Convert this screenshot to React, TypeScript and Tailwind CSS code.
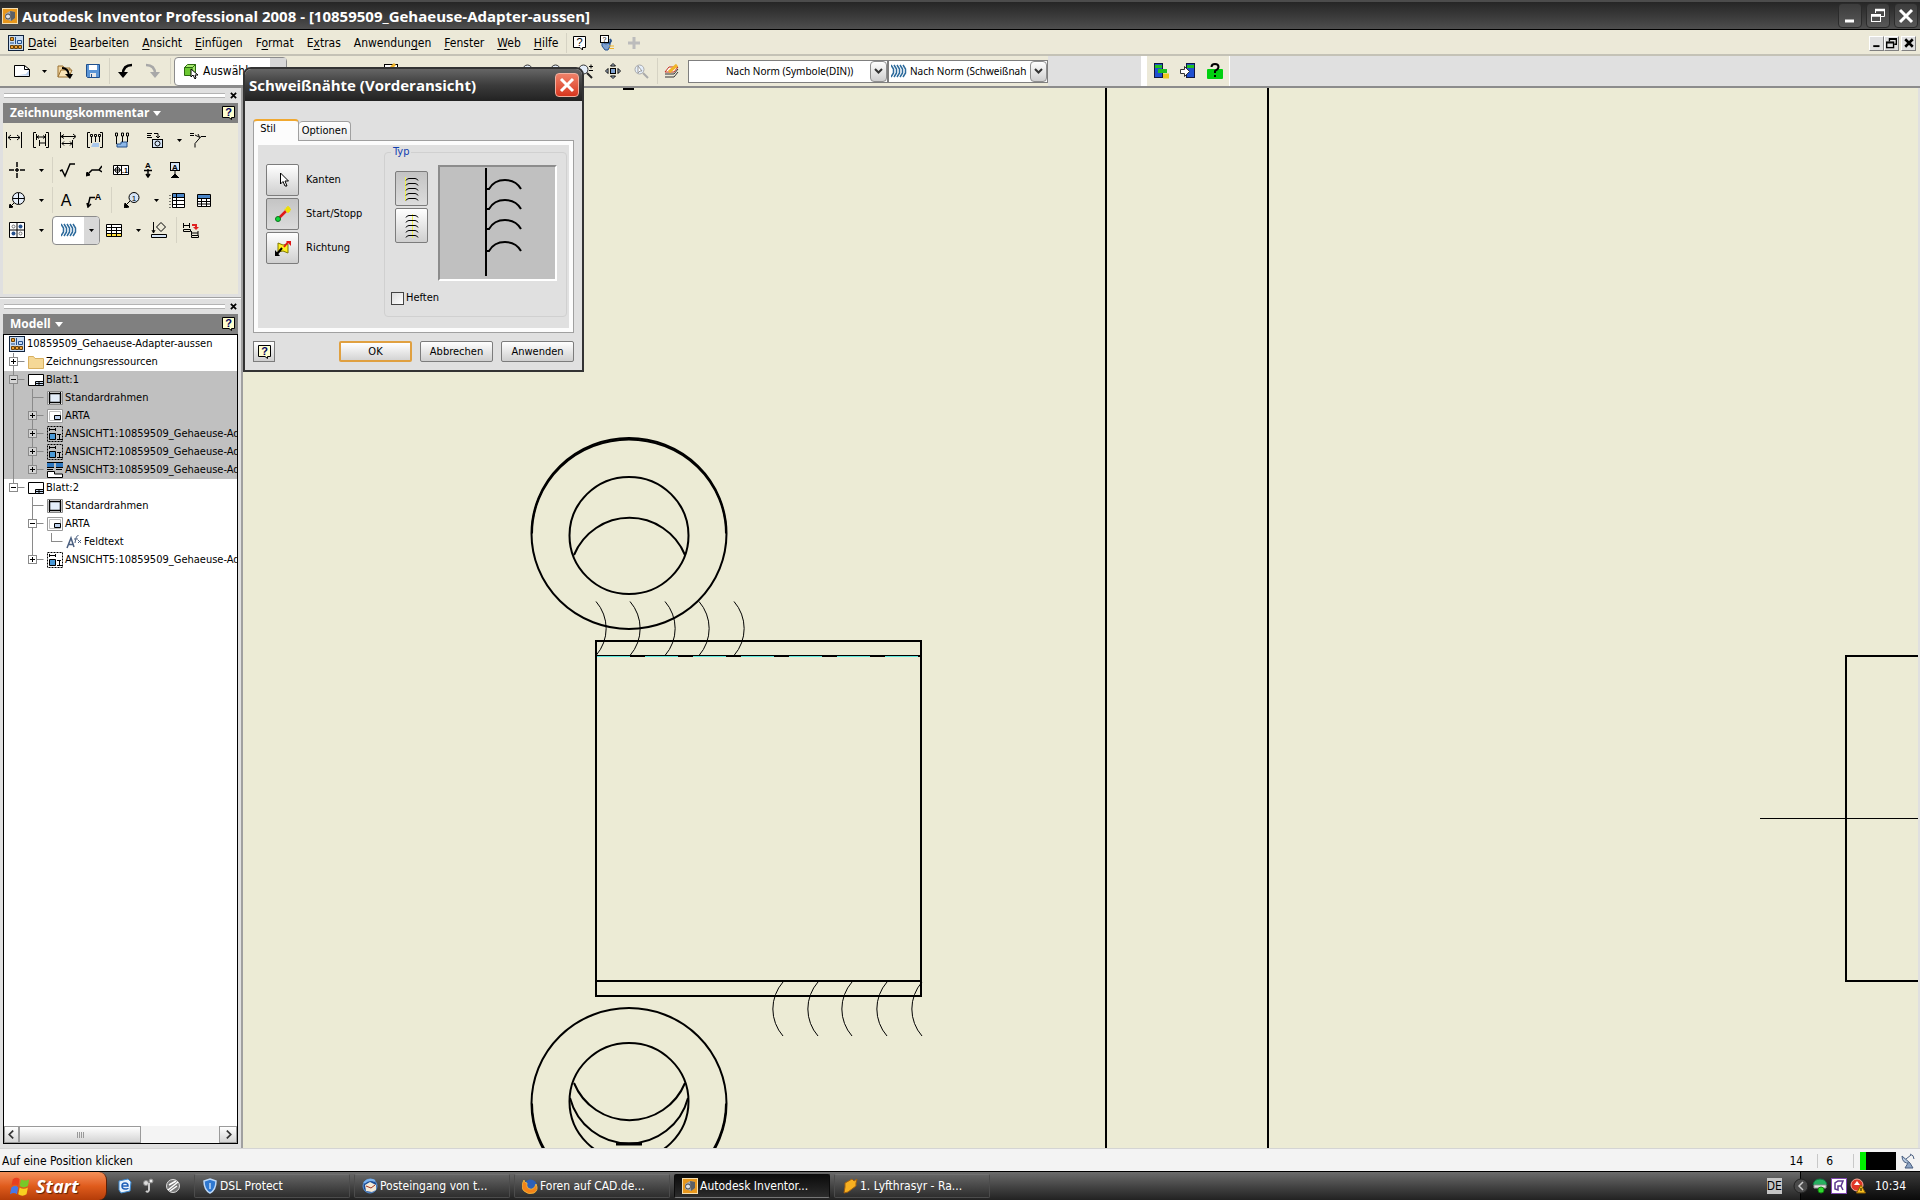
import type { ReactNode } from "react";
import clsx from "clsx";

const ui = "font-['DejaVu_Sans_Condensed','DejaVu_Sans',sans-serif]";
const caption = "font-['Open_Sans',sans-serif] font-bold";

type IconProps = { children: ReactNode; size?: number; className?: string };

// Every toolbar glyph is drawn on a 16 unit grid
function Icon({ children, size = 16, className }: IconProps) {
  return (
    <svg
      width={size}
      height={size}
      viewBox="0 0 16 16"
      fill="none"
      stroke="#000"
      aria-hidden="true"
      className={clsx("shrink-0", className)}
    >
      {children}
    </svg>
  );
}

function Caret({ color = "#000", className }: { color?: string; className?: string }) {
  return (
    <svg width="5" height="3" viewBox="0 0 5 3" className={clsx("shrink-0", className)} aria-hidden="true">
      <path d="M0 0h5L2.5 3z" fill={color} />
    </svg>
  );
}

function Separator() {
  return <span className="h-[26px] w-px shrink-0 bg-[#d6d3c4]" />;
}

function HelpIcon({ size = 13 }: { size?: number }) {
  return (
    <svg width={size} height={size + 1} viewBox="0 0 13 14" className="shrink-0" aria-hidden="true">
      <path d="M.5.5h12v11h-3v2l-2.500-2h-6.500z" fill="#ffffd0" stroke="#000" />
      <text x="6.500" y="10" fontSize="11" fontWeight="700" textAnchor="middle" fill="#000060" fontFamily="Liberation Sans">
        ?
      </text>
    </svg>
  );
}

/* ---------- Window title ---------- */

function AppIcon({ size = 16 }: { size?: number }) {
  return (
    <Icon size={size}>
      <rect x=".5" y=".5" width="15" height="15" fill="#e8971c" stroke="#f5deb0" />
      <path d="M3 6l5-3 5 1v6l-4 3-6-2z" fill="#a4a7ab" stroke="none" />
      <path d="M8 3l5 1v6l-4 3z" fill="#5c6066" stroke="none" />
      <circle cx="6" cy="8.500" r="2.500" fill="#dfe2e6" stroke="#4b4e52" />
    </Icon>
  );
}

function TitleBar() {
  const button =
    "flex h-[25px] w-6 items-center justify-center rounded-sm border border-[#2b2b2b] bg-linear-to-b from-[#3c3c3c] to-[#585858]";
  return (
    <header className="flex h-[30px] shrink-0 items-center border-t-2 border-b border-t-[#4c4c4c] border-b-black bg-linear-to-b from-[#262626] to-[#4e4e4e] px-0.5">
      <AppIcon size={16} />
      <h1 className={clsx(caption, "ml-1 text-[15px] leading-5 whitespace-nowrap text-white")}>
        Autodesk Inventor Professional 2008 - [10859509_Gehaeuse-Adapter-aussen]
      </h1>
      <div className="ml-auto flex gap-1">
        <button aria-label="Minimieren" className={button}>
          <Icon><path d="M3 13h9" stroke="#fff" strokeWidth="3" /></Icon>
        </button>
        <button aria-label="Wiederherstellen" className={button}>
          <Icon>
            <path d="M5.500 5V1.500h9v7H11" stroke="#fff" />
            <path d="M5 2h10M1 7.500h10" stroke="#fff" strokeWidth="2.500" />
            <rect x="1.500" y="6.500" width="9" height="7" stroke="#fff" />
          </Icon>
        </button>
        <button aria-label="Schließen" className={button}>
          <Icon><path d="M2 2l12 12M14 2L2 14" stroke="#fff" strokeWidth="3" /></Icon>
        </button>
      </div>
    </header>
  );
}

/* ---------- Menu ---------- */

// [text before the mnemonic, mnemonic, rest]
const menus = [
  ["", "D", "atei"],
  ["", "B", "earbeiten"],
  ["", "A", "nsicht"],
  ["", "E", "infügen"],
  ["F", "o", "rmat"],
  ["E", "x", "tras"],
  ["Anwendun", "g", "en"],
  ["", "F", "enster"],
  ["", "W", "eb"],
  ["", "H", "ilfe"],
];

function DrawingIcon({ size = 16 }: { size?: number }) {
  return (
    <Icon size={size}>
      <rect x=".5" y=".5" width="15" height="15" fill="#c9dcf2" stroke="#10223c" />
      <path d="M2.500 2.500h3v3h-3zM2.500 10.500h3v3h-3zM10.500 10.500h3v3h-3zM6.500 10.500h3v3h-3z" fill="#f0a030" stroke="#6a4208" />
      <path d="M2 8h4M7.500 2v7M9.500 5.500h4v3h-4z" stroke="#24508c" />
    </Icon>
  );
}

function MenuBar() {
  const child =
    "flex size-[15px] items-center justify-center border border-white border-r-[#808080] border-b-[#808080] bg-[#e0e0e0]";
  return (
    <nav className="flex h-[26px] shrink-0 items-center border-b-2 border-[#c4c2b6] bg-[#ece9d8] pt-0.5 pr-1 pl-2">
      <DrawingIcon />
      <div className={clsx(ui, "ml-1 flex gap-[13px] text-[12px] leading-4 text-black")}>
        {menus.map(([before, key, rest]) => (
          <button key={before + key + rest} className="whitespace-nowrap">
            {before}
            <u className="underline-offset-2">{key}</u>
            {rest}
          </button>
        ))}
      </div>
      <span className="ml-2 h-5 w-px bg-[#d6d3c4]" />
      <div className="ml-1.5 flex items-center gap-3">
        <button aria-label="Hilfe" className="flex">
          <svg width="13" height="15" viewBox="0 0 13 15" aria-hidden="true">
            <path d="M.5.500h12v11h-3v2.500l-2.500-2.500h-6.500z" fill="#fff" stroke="#000" />
            <text x="6.500" y="10" fontSize="11" textAnchor="middle" fontFamily="Liberation Sans">?</text>
          </svg>
        </button>
        <button aria-label="Assistent">
          <Icon>
            <path d="M4 7l4 2 4-2v4l-2 4H7l-3-4z" fill="#7da0d0" stroke="#24508c" />
            <rect x="2.500" y=".5" width="8" height="7" fill="#fff" />
            <text x="6.500" y="7" fontSize="7" stroke="none" fill="#000" textAnchor="middle" fontFamily="Liberation Sans">?</text>
            <path d="M11 11h5M11 13.500h5" stroke="#f0b428" />
            <path d="M12 4l1 2-2 3" stroke="#24508c" strokeWidth="2" />
          </Icon>
        </button>
        <button aria-label="Hinzufügen">
          <Icon><path d="M8 2v12M2 8h12" stroke="#bcbcbc" strokeWidth="3" /></Icon>
        </button>
      </div>
      <div className="ml-auto flex">
        <button aria-label="Fenster minimieren" className={child}>
          <Icon size={10}><path d="M2 13h10" strokeWidth="3" /></Icon>
        </button>
        <button aria-label="Fenster wiederherstellen" className={child}>
          <Icon size={11}>
            <path d="M5 5V1h10v8h-3M5 2h10M1 7h10" strokeWidth="2" />
            <rect x="1" y="6" width="10" height="8" strokeWidth="2" />
          </Icon>
        </button>
        <button aria-label="Fenster schließen" className={clsx(child, "ml-0.5")}>
          <Icon size={10}><path d="M2 2l12 12M14 2L2 14" strokeWidth="4" /></Icon>
        </button>
      </div>
    </nav>
  );
}

/* ---------- Standard toolbar ---------- */

function StyleSelect({ label, value, icon, className, textClass }: {
  label: string;
  value: string;
  icon?: ReactNode;
  className: string;
  textClass: string;
}) {
  return (
    <label className={clsx("flex h-[23px] shrink-0 items-center border border-[#7f7f7f] bg-white", className)}>
      <span className="sr-only">{label}</span>
      {icon}
      <select className={clsx("h-full min-w-0 flex-1 appearance-none font-['Noto_Sans',sans-serif] text-[10px] leading-4 text-black", textClass)}>
        <option>{value}</option>
      </select>
      <span className="pointer-events-none flex h-full w-[17px] shrink-0 items-center justify-center rounded-sm border border-[#8f8f8f] bg-linear-to-b from-white to-[#cfcfcf]">
        <svg width="9" height="6" viewBox="0 0 9 6" fill="none" stroke="#333" strokeWidth="2" aria-hidden="true">
          <path d="M1 1l3.500 3.500L8 1" />
        </svg>
      </span>
    </label>
  );
}

function WeldIcon() {
  return (
    <Icon>
      {[0, 3, 6, 9, 12].map((x) => (
        <path key={x} d={`M${x} 2l2.500 4v4L${x} 14`} stroke="#2c6a9c" strokeWidth="1.500" />
      ))}
    </Icon>
  );
}

function ZoomGlass({ gray, children }: { gray?: boolean; children?: ReactNode }) {
  return (
    <Icon>
      <circle cx="6.500" cy="6.500" r="4.500" fill="#e4eefa" stroke={gray ? "#aaa" : "#333"} />
      <path d="M10 10l5 5" stroke={gray ? "#aaa" : "#222"} strokeWidth="2" />
      {children}
    </Icon>
  );
}

function Toolbar() {
  return (
    <div className="flex h-8 shrink-0 items-stretch border-b-2 border-[#8c8c8c] bg-[#e0e0e0]">
      <div className="flex items-center bg-[#ece9d8] pl-[14px]">
        <button aria-label="Neu">
          <Icon>
            <path d="M.5 2.500h10l5 4v7H.5z" fill="#fff" />
            <path d="M2 12.500h13V7l-3 4z" fill="#bcd0ec" stroke="none" />
            <path d="M10.500 2.500v4h5" />
          </Icon>
        </button>
        <Caret className="ml-3" />
        <button aria-label="Öffnen" className="ml-2.5">
          <Icon>
            <path d="M1 14V3h5l1 2h6v3" fill="#f2d6a0" stroke="#9a7030" />
            <path d="M1 14l3-7h11l-3 7z" fill="#f8e4b8" stroke="#9a7030" />
            <path d="M5 5q6 0 7 7" strokeWidth="2" />
            <path d="M8 11h8l-3 5z" fill="#000" stroke="none" />
          </Icon>
        </button>
        <button aria-label="Speichern" className="ml-3">
          <Icon>
            <path d="M1.500 1.500h13v13h-12l-1-1z" fill="#5b95d6" stroke="#1f4f8c" />
            <path d="M4 2h8v5H4z" fill="#fff" stroke="none" />
            <path d="M5 10h6v4H5z" fill="#e8e8e8" stroke="none" />
            <path d="M6.500 11v3" stroke="#1f4f8c" />
          </Icon>
        </button>
        <span className="w-2" />
        <Separator />
        <button aria-label="Rückgängig" className="ml-2">
          <Icon>
            <path d="M14 2Q5 2 5 11" strokeWidth="2.500" />
            <path d="M0 9h10l-5 6z" fill="#000" stroke="none" />
          </Icon>
        </button>
        <button aria-label="Wiederholen" className="ml-2.5">
          <Icon>
            <path d="M2 2Q11 2 11 11" stroke="#a8a8a8" strokeWidth="2.500" />
            <path d="M6 9h10l-5 6z" fill="#a8a8a8" stroke="none" />
          </Icon>
        </button>
        <span className="w-2.5" />
        <Separator />
        <button className="ml-[3px] flex h-[29px] w-[113px] items-center rounded-sm border border-[#8c8c8c] bg-white pl-2">
          <Icon>
            <path d="M1.500 4.500h8v8h-8z" fill="#6cc832" stroke="#2c6a10" />
            <path d="M1.500 4.500l3-3h8l-3 3zM9.500 4.500l3-3v8l-3 3" fill="#a4e86c" stroke="#2c6a10" />
            <path d="M8 6v8l2-2 2 4 1-1-1-3h3z" fill="#fff" />
          </Icon>
          <span className={clsx(ui, "ml-1 text-[12px] leading-4")}>Auswählen</span>
          <span className="ml-auto h-full w-4 bg-[#d8d8d8]" />
        </button>
        <div className="ml-24 flex items-center">
          <Icon>
            <rect x="1.500" y="1.500" width="13" height="13" fill="#fff" />
            <path d="M6 7l6-6" stroke="#f0b428" strokeWidth="3" />
          </Icon>
        </div>
        <div className="ml-[122px] flex items-center gap-3">
          <ZoomGlass />
          <ZoomGlass />
          <ZoomGlass>
            <path d="M12 3.500h4M14 1.500v4M12 7.500h4" />
          </ZoomGlass>
          <Icon>
            <rect x="5.500" y="5.500" width="5" height="5" fill="#7da0d0" />
            <path d="M8 .5L10.500 3h-5zM8 15.500L5.500 13h5zM.5 8L3 5.500v5zM15.500 8L13 10.500v-5z" fill="#bcd0ec" />
          </Icon>
          <ZoomGlass gray>
            <path d="M5 3v7l2-2h2z" fill="#fff" stroke="#999" />
          </ZoomGlass>
        </div>
        <span className="w-2" />
        <Separator />
        <button aria-label="Skizze" className="mr-2 ml-1.5">
          <Icon>
            <path d="M1 11h9l4-5M1 14h9l4-5" stroke="#333" />
            <path d="M1 9l4-5h9l-4 5z" fill="#fff" stroke="#c03020" />
            <path d="M5 9l8-7" stroke="#f0b428" strokeWidth="3" />
          </Icon>
        </button>
        <StyleSelect label="Symbolstil" value="Nach Norm (Symbole(DIN))" className="w-[200px]" textClass="pl-[37px]" />
        <StyleSelect
          label="Schweißnahtstil"
          value="Nach Norm (Schweißnah"
          className="w-[160px] pl-0.5"
          textClass="pl-[3px]"
          icon={<WeldIcon />}
        />
      </div>
      <div className="ml-[93px] flex items-center gap-[11px] border-l-[6px] border-white bg-[#ece9d8] px-1.5">
        <button aria-label="Vorlagen">
          <Icon>
            <rect x="1.500" y=".5" width="8" height="14" fill="#2050d0" stroke="#101840" />
            <path d="M2 2h7v3H2z" fill="#20c020" stroke="none" />
            <path d="M5 8h9" stroke="#20c020" strokeWidth="4" />
            <path d="M10 13h6" stroke="#f0c820" strokeWidth="5" />
          </Icon>
        </button>
        <button aria-label="Import">
          <Icon>
            <rect x="6.500" y=".5" width="8" height="14" fill="#2050d0" stroke="#101840" />
            <path d="M7 2h7v3H7z" fill="#20c020" stroke="none" />
            <path d="M.5 6.500h4v-3l5 5-5 5v-3h-4z" fill="#fff" stroke="#333" />
          </Icon>
        </button>
        <button aria-label="Info">
          <Icon>
            <rect x="0" y="6" width="16" height="10" rx="1" fill="#00d010" stroke="none" />
            <path d="M4.500 4Q4.500 1 8 1t3.500 3Q11.500 6 8 8v2M8 12v2" strokeWidth="2" />
          </Icon>
        </button>
      </div>
      <span className="w-px bg-white" />
    </div>
  );
}

/* ---------- Left dock ---------- */

function Gripper({ label }: { label: string }) {
  return (
    <div className="flex h-[14px] shrink-0 items-center pr-1 pl-1">
      <span className="h-[5px] flex-1 border-y border-[#b4b4b4] bg-white" />
      <button aria-label={label} className="ml-[5px] flex">
        <Icon size={7}><path d="M2 2l12 12M14 2L2 14" strokeWidth="4" /></Icon>
      </button>
    </div>
  );
}

function PanelHeader({ title }: { title: string }) {
  return (
    <div className="flex h-5 shrink-0 items-center bg-[#808080] pr-[3px] pl-[7px]">
      <h2 className={clsx(caption, "text-[12px] leading-4 text-white")}>{title}</h2>
      <svg width="8" height="5" viewBox="0 0 8 5" className="ml-1" aria-hidden="true">
        <path d="M0 0h8L4 5z" fill="#fff" />
      </svg>
      <button aria-label={`Hilfe zu ${title}`} className="ml-auto">
        <HelpIcon />
      </button>
    </div>
  );
}

function Tool({ label, children, className }: { label: string; children: ReactNode; className?: string }) {
  return (
    <button aria-label={label} className={clsx("flex w-[27px] shrink-0 justify-center", className)}>
      <Icon>{children}</Icon>
    </button>
  );
}

function ArrowTool({ label }: { label: string }) {
  return (
    <button aria-label={label} className="flex h-4 w-[22px] shrink-0 items-center justify-center">
      <Caret />
    </button>
  );
}

function ToolPalette() {
  const row = "flex h-[30px] items-center";
  const glyph = { stroke: "none", fill: "#000", fontFamily: "Liberation Sans" };
  return (
    <div className="mx-[3px] h-[171px] shrink-0 bg-[#ece9d8] pt-[2px]">
      <div className={row}>
        <Tool label="Bemaßung" className="-ml-[3px]">
          <path d="M.5 0v16M15.500 0v16M2 5.500h12M5 3L2 5.500 5 8M11 3l3 2.500L11 8" />
        </Tool>
        <Tool label="Basislinie">
          <path d="M3 .5H.5v15H3M13 .5h2.500v15H13M3.500 2v6M12.500 2v12M4 5h8M6.500 8v6M7 11h5M6 3.500L4 5l2 1.500M10 3.500L12 5l-2 1.500" />
        </Tool>
        <Tool label="Koordinaten">
          <path d="M.5 0v16M1 4.500h14M13 2l3 2.500L13 7M12.500 8v8M2 11.500h10M4 9.500l-2 2 2 2M10 9.500l2 2-2 2M4 2.500l-3 2 3 2" />
        </Tool>
        <Tool label="Koordinatensatz">
          <path d="M6 11h6v4H4z" fill="#a9c8ec" stroke="none" />
          <path d="M3 .5H.5v15H3M13 .5h2.500v15H13M4.500 5v6M8.500 5v5M12.500 5v5" />
          <path d="M3.500 2.500h2v2h-2zM7.500 2.500h2v2h-2zM11.500 2.500h2v2h-2z" />
        </Tool>
        <Tool label="Bohrungskoordinaten">
          <path d="M3 15v-3h4v-2h6v5z" fill="#8db8e8" stroke="#24508c" />
          <path d="M2.500 4v8M8.500 4v6M13.500 4v6M1.500 1h2v3h-2zM7.500 1h2v3h-2zM12.500 1h2v3h-2z" />
        </Tool>
        <Tool label="Bohrungsinfo" className="ml-1.5">
          <path d="M0 1.500h5M0 3.500h4M0 5.500h5M7 1.500h4v4M9 4l2 2 2-2" />
          <rect x="5.500" y="7.500" width="10" height="8" fill="#d5e4f6" />
          <circle cx="10.500" cy="11.500" r="2.500" />
        </Tool>
        <ArrowTool label="Bohrungsinfo wählen" />
        <Tool label="Fase" className="-ml-1.5">
          <path d="M0 1.500h4M0 3.500h4M5 3l4 2M8 2l2 4M5 15.500v-4L11 4.500h5" />
        </Tool>
      </div>
      <div className={row}>
        <Tool label="Mittelpunktmarkierung">
          <path d="M8 0v5M8 6v4M8 11v5M0 8h5M6 8h4M11 8h5" strokeWidth="1.500" />
        </Tool>
        <ArrowTool label="Markierung wählen" />
        <Separator />
        <Tool label="Oberfläche">
          <path d="M1 9l2-1 3 6L11 2h5" strokeWidth="1.500" />
        </Tool>
        <Tool label="Schweißsymbol">
          <path d="M1 13L6 8h7l3-4M13 8l3 2" strokeWidth="1.500" />
          <path d="M0 14l4-1-3-3z" fill="#000" />
        </Tool>
        <Tool label="Form- und Lagetoleranz">
          <path d="M.5 3.500h15v9H.5zM8.500 3.500v9" fill="#fff" />
          <circle cx="4.500" cy="8" r="2.500" />
          <path d="M4.500 4v8M1 8h7" />
          <text x="12" y="11" fontSize="7" fontWeight="700" textAnchor="middle" {...glyph}>.1</text>
        </Tool>
        <Tool label="Bezugsmarke">
          <text x="8" y="6" fontSize="8" fontWeight="700" textAnchor="middle" {...glyph}>A</text>
          <path d="M4 8.500h8M8 7v8M6 12l2 3 2-3" strokeWidth="1.500" />
        </Tool>
        <Tool label="Bezugssymbol">
          <rect x="3.500" y=".5" width="9" height="8" fill="#d5e4f6" />
          <text x="8" y="7.500" fontSize="8" fontWeight="700" textAnchor="middle" {...glyph}>A</text>
          <path d="M8 9v4" />
          <path d="M4 16l4-4 4 4z" fill="#000" />
        </Tool>
      </div>
      <div className={row}>
        <Tool label="Bezugsziel">
          <circle cx="9.500" cy="6.500" r="6" fill="#e4eefa" />
          <path d="M3.500 6.500h12M9.500 1v11M5 11l-4 4" />
          <path d="M0 16l1-4 3 3z" fill="#000" />
        </Tool>
        <ArrowTool label="Bezugsziel wählen" />
        <Separator />
        <Tool label="Text">
          <text x="7" y="14" fontSize="16" textAnchor="middle" {...glyph}>A</text>
        </Tool>
        <Tool label="Führungslinientext">
          <path d="M2 14L4 5.500h5M1 11l1 4 3-3" strokeWidth="1.500" />
          <text x="12" y="8" fontSize="9" fontWeight="700" textAnchor="middle" {...glyph}>A</text>
        </Tool>
        <span className="w-1" />
        <Separator />
        <Tool label="Positionsnummer" className="ml-1.5">
          <circle cx="10" cy="5.500" r="5" fill="#d5e4f6" />
          <text x="10" y="8.500" fontSize="8" textAnchor="middle" {...glyph}>1</text>
          <path d="M6 9l-4 4" />
          <path d="M0 16l1-5 4 4z" fill="#000" />
        </Tool>
        <ArrowTool label="Positionsnummer wählen" />
        <Tool label="Bauteilliste" className="-ml-1">
          <path d="M3.500 1.500h12v14h-12z" fill="#fff" />
          <path d="M4 2h11v3H4z" fill="#4a86c8" stroke="none" />
          <path d="M3.500 5.500h12M3.500 8.500h12M3.500 12.500h12M7.500 2v13" />
          <path d="M1 3v13" strokeDasharray="1 2" />
        </Tool>
        <Tool label="Tabelle">
          <path d="M1.500 2.500h13v12h-13z" fill="#fff" />
          <path d="M2 3h12v3H2z" fill="#4a86c8" stroke="none" />
          <path d="M1.500 6.500h13M1.500 9.500h13M1.500 12h13M5.500 6v8M10.500 6v8" />
        </Tool>
      </div>
      <div className={row}>
        <Tool label="Symbole">
          <path d="M.5.500h15v15H.5z" fill="#fff" />
          <path d="M8 .5v15M.5 8h15" />
          <circle cx="4.500" cy="4.500" r="1.500" stroke="#555" strokeWidth=".8" />
          <circle cx="11.500" cy="4.500" r="2" fill="#24508c" stroke="none" />
          <circle cx="4.500" cy="11.500" r="2" fill="#24508c" stroke="none" />
          <circle cx="11.500" cy="11.500" r="1.500" stroke="#555" strokeWidth=".8" />
        </Tool>
        <ArrowTool label="Symbol wählen" />
        <div className="flex h-[29px] w-12 shrink-0 overflow-hidden rounded-sm border border-[#8c8c8c] bg-white">
          <button aria-label="Schweißnaht" className="flex flex-1 items-center justify-center"><WeldIcon /></button>
          <button aria-label="Schweißnaht wählen" className="flex w-[15px] items-center justify-center bg-[#d8d8d8]">
            <Caret />
          </button>
        </div>
        <Tool label="Bohrungstabelle">
          <path d="M.5 2.500h15v12H.5z" fill="#fff" />
          <path d="M1 12h14v2H1z" fill="#ffe040" stroke="none" />
          <path d="M.5 5.500h15M.5 8.500h15M.5 11.500h15M5.500 2.500v12M10.500 6v8" />
        </Tool>
        <ArrowTool label="Tabelle wählen" />
        <Tool label="Revision" className="-ml-1">
          <path d="M.5 12.500h15v3H.5z" fill="#d5e4f6" />
          <path d="M2.500 0v10M1 8l1.500 3L4 8M10 .5l4.500 4.500-4.500 4.500L5.500 5z" />
        </Tool>
        <span className="w-1" />
        <Separator />
        <Tool label="Bemaßungen abrufen">
          <path d="M.5 1v5M6.500 1v5M1 3.500h5M.5 7.500h7v2h-7zM8.500 9v4M15 9v4M9 11h6M8.500 13.500h7v2h-7z" />
          <path d="M9 3h4v3" stroke="#e02020" strokeWidth="2" />
          <path d="M10 5h6l-3 3z" fill="#e02020" stroke="none" />
        </Tool>
      </div>
    </div>
  );
}

/* ---------- Model tree ---------- */

type NodeKind = "root" | "folder" | "sheet" | "frame" | "block" | "view" | "section" | "field";
type TreeRow = { level: number; kind: NodeKind; text: string; toggle?: "+" | "-"; active?: boolean };

const rows: TreeRow[] = [
  { level: 0, kind: "root", text: "10859509_Gehaeuse-Adapter-aussen" },
  { level: 1, kind: "folder", text: "Zeichnungsressourcen", toggle: "+" },
  { level: 1, kind: "sheet", text: "Blatt:1", toggle: "-", active: true },
  { level: 2, kind: "frame", text: "Standardrahmen", active: true },
  { level: 2, kind: "block", text: "ARTA", toggle: "+", active: true },
  { level: 2, kind: "view", text: "ANSICHT1:10859509_Gehaeuse-Ad", toggle: "+", active: true },
  { level: 2, kind: "view", text: "ANSICHT2:10859509_Gehaeuse-Ad", toggle: "+", active: true },
  { level: 2, kind: "section", text: "ANSICHT3:10859509_Gehaeuse-Ad", toggle: "+", active: true },
  { level: 1, kind: "sheet", text: "Blatt:2", toggle: "-" },
  { level: 2, kind: "frame", text: "Standardrahmen" },
  { level: 2, kind: "block", text: "ARTA", toggle: "-" },
  { level: 3, kind: "field", text: "Feldtext" },
  { level: 2, kind: "view", text: "ANSICHT5:10859509_Gehaeuse-Ad", toggle: "+" },
];

const nodeIcons: Record<NodeKind, ReactNode> = {
  root: null,
  folder: <path d="M.5 14.500v-12h5l1.500 2h8.500v10z" fill="#f5d896" stroke="#d8b060" />,
  sheet: (
    <>
      <path d="M.5 2.500h15v11H.5z" fill="#fff" />
      <path d="M7.500 9.500h8v4h-8zM11 10v3M8 11.500h7" fill="#c9dcf2" />
    </>
  ),
  frame: (
    <>
      <path d="M.5 1.500h15v13H.5z" fill="#fff" stroke="#888" />
      <path d="M2.500 3.500h11v9h-11z" fill="#e4eefa" strokeWidth="1.500" />
      <path d="M2 2l2 2M14 2l-2 2M2 14l2-2M14 14l-2-2" />
    </>
  ),
  block: (
    <>
      <path d="M.5 1.500h15v13H.5z" fill="#fff" stroke="#999" />
      <path d="M2.500 3.500h11v9h-11z" stroke="#bbb" />
      <path d="M7.500 7.500h6v4h-6z" fill="#bcd0ec" />
    </>
  ),
  view: (
    <>
      <path d="M.5.500h15v15H.5z" strokeDasharray="2 1" />
      <path d="M2.500 7.500h6v6h-6z" fill="#4a9ad8" />
      <path d="M2 3.500h6M2.500 2v3M8.500 2v3M10 8.500h4M12.500 8v5M10 13.500h5" />
    </>
  ),
  section: (
    <>
      <path d="M0 1h7v4H0zM9 1h7v4H9z" fill="#2f78c0" stroke="none" />
      <path d="M0 .5h16M0 5.500h7M9 5.500h7M0 7.500h6M9 7.500h6" />
      <path d="M.5 9.500h7V12h8v3.500H.5z" fill="#fff" />
    </>
  ),
  field: (
    <>
      <path d="M1 14L5 4l3 9M2.500 10.500h5" stroke="#4a5f80" strokeWidth="1.500" />
      <path d="M9 9q1-8 3.500-7.500M8 5h4M12 6l3 3M15 6l-3 3" stroke="#4a5f80" />
    </>
  ),
};

// Connector lines and the +/- box in front of a node
function Guide({ row, index }: { row: TreeRow; index: number }) {
  const lastSheet = 8;
  const x = row.level === 1 ? 9 : row.level === 2 ? 28 : 47;
  const isLastChild = index === 7 || index === 12;
  return (
    <svg width={row.level * 19 + 5} height="18" fill="none" stroke="#8a8a8a" className="shrink-0" aria-hidden="true">
      {index <= lastSheet && <path d={`M9.500 0V${index === lastSheet ? 9 : 18}`} />}
      {row.level === 3 && <path d="M28.500 0v18" />}
      {row.level > 1 && <path d={`M${x + 0.5} 0V${isLastChild || row.level === 3 ? 9 : 18}`} />}
      <path d={`M${x + 0.5} 8.500h11`} />
      {row.toggle && (
        <>
          <rect x={x - 3.5} y="4.500" width="8" height="8" fill={row.active ? "#d4d4d4" : "#fff"} />
          <path d={`M${x - 2} 8.500h5`} stroke="#000" />
          {row.toggle === "+" && <path d={`M${x + 0.5} 6v5`} stroke="#000" />}
        </>
      )}
    </svg>
  );
}

function ModelTree() {
  return (
    <div className="mx-[3px] flex min-h-0 flex-1 flex-col border border-black bg-white">
      <ul className={clsx(ui, "min-h-0 flex-1 overflow-hidden text-[11px] leading-4 text-black")}>
        {rows.map((row, i) => (
          <li key={i} className={clsx("flex h-[18px] items-center whitespace-nowrap", row.active && "bg-[#c0c0c0]", i === 0 && "pl-[5px]")}>
            {row.level > 0 && <Guide row={row} index={i} />}
            {row.kind === "root" ? <DrawingIcon /> : <Icon>{nodeIcons[row.kind]}</Icon>}
            <span className="ml-0.5">{row.text}</span>
          </li>
        ))}
      </ul>
      <div className="flex h-[17px] shrink-0 bg-[#f4f4f4]">
        <button aria-label="Nach links" className="flex w-[15px] items-center justify-center border border-[#9a9a9a] bg-linear-to-b from-white to-[#d4d4d4]">
          <Icon size={9}><path d="M11 1L4 8l7 7" stroke="#333" strokeWidth="3" /></Icon>
        </button>
        <div className="flex flex-1">
          <span className="flex w-[61%] items-center justify-center gap-px border border-[#9a9a9a] bg-linear-to-b from-white to-[#d4d4d4]">
            {[0, 1, 2, 3].map((n) => (
              <i key={n} className="h-1.5 w-px bg-[#999]" />
            ))}
          </span>
        </div>
        <button aria-label="Nach rechts" className="flex w-[18px] items-center justify-center border border-[#9a9a9a] bg-linear-to-b from-white to-[#d4d4d4]">
          <Icon size={9}><path d="M5 1l7 7-7 7" stroke="#333" strokeWidth="3" /></Icon>
        </button>
      </div>
    </div>
  );
}

function LeftDock() {
  return (
    <aside className="flex w-[243px] shrink-0 flex-col border-r-2 border-[#a0a0a0] bg-[#e0e0e0] pb-1">
      <Gripper label="Zeichnungskommentar schließen" />
      <div className="mx-[3px] mt-px"><PanelHeader title="Zeichnungskommentar" /></div>
      <ToolPalette />
      <div className="mt-[3px] h-[2px] shrink-0 border-t border-[#a0a0a0] bg-white" />
      <div className="flex min-h-0 flex-1 flex-col">
        <Gripper label="Modell schließen" />
        <div className="mx-[3px] mt-px"><PanelHeader title="Modell" /></div>
        <ModelTree />
      </div>
    </aside>
  );
}

/* ---------- Drawing sheet ---------- */

const topWelds = [596, 630, 665, 699, 734];
const bottomWelds = [783, 818, 852, 887, 922];

function Sheet() {
  return (
    <main className="min-w-0 flex-1 overflow-hidden border-r-2 border-[#e0e0e0] bg-[#ecebd5]">
      <svg width="100%" height="100%" fill="none" stroke="#000" strokeWidth="2" aria-label="Zeichnungsblatt">
        <g transform="translate(-243 -88)">
          <path d="M623 89h11" />
          <path d="M1106 88v1200M1268 88v1200" />
          <path d="M1960 656h-114v325h114" />
          <path d="M1760 818.500h200" strokeWidth="1" />

          {/* upper pipe end */}
          <ellipse cx="629" cy="533.500" rx="97.500" ry="95.500" />
          <path d="M532 533.500A97 94 0 0 1 726 533.500" />
          <ellipse cx="629" cy="535.500" rx="59.500" ry="58.500" />
          <path d="M574 555A60 60 0 0 1 685 555" />

          {/* body */}
          <path d="M596 641h325v355h-325zM596 981h325" />
          <path d="M597 656h324" />
          <path d="M597 656.500h324" stroke="#5ce6dc" strokeWidth="1" strokeDasharray="33 15" />

          {/* lower pipe end */}
          <ellipse cx="629" cy="1103.500" rx="97.500" ry="95.500" />
          <path d="M532 1103.500A97 93 0 0 0 726 1103.500" />
          <ellipse cx="629" cy="1101.500" rx="59.500" ry="58.500" />
          <path d="M574 1083A60 60 0 0 0 685 1083" />
          <path d="M570 1098A61 61 0 0 0 688 1098" />
          <path d="M616 1144h26" strokeWidth="3" />

          {/* weld beads */}
          <g strokeWidth="1">
            {topWelds.map((x) => (
              <path key={x} d={`M${x} 601.500a41 41 0 0 1 0 54`} />
            ))}
            {bottomWelds.map((x) => (
              <path key={x} d={`M${x} 982a41 41 0 0 0 0 54`} />
            ))}
          </g>
        </g>
      </svg>
    </main>
  );
}

/* ---------- Weld dialog ---------- */

const pushed = "border-[#7c7c7c] bg-linear-to-b from-[#c4c4c4] to-[#dcdcdc]";
const raised = "border-[#7c7c7c] bg-linear-to-b from-white to-[#cfcfcf]";

function PickButton({ id, label, active, children }: { id: string; label: string; active?: boolean; children: ReactNode }) {
  return (
    <div className="flex h-[34px] items-start">
      <button
        id={id}
        aria-labelledby={`${id}-label`}
        className={clsx("flex h-8 w-[33px] items-center justify-center rounded-xs border", active ? pushed : raised)}
      >
        <Icon>{children}</Icon>
      </button>
      <span id={`${id}-label`} className="mt-2 ml-[7px] text-[11px] leading-4">{label}</span>
    </div>
  );
}

function BeadIcon({ x }: { x: number }) {
  return (
    <svg width="18" height="26" fill="none" stroke="#000" aria-hidden="true">
      <path d={`M${x}.5 1v24`} stroke="#f0f050" />
      {[1, 6, 11, 16, 21].map((y) => (
        <path key={y} d={`M3 ${y + 3.5}q1-2 3-2h6q2 0 3 2`} />
      ))}
    </svg>
  );
}

function WeldDialog() {
  const footer = "h-[21px] w-[73px] rounded-xs text-[11px] leading-4";
  return (
    <section
      role="dialog"
      aria-label="Schweißnähte (Vorderansicht)"
      className={clsx(ui, "absolute top-[67px] left-[243px] w-[341px] rounded-t-lg border-2 border-[#333] bg-[#e0e0e0] text-black")}
    >
      <div className="flex h-8 items-center rounded-t-md bg-linear-to-b from-[#666] via-[#3c3c3c] to-[#222] pr-[3px] pl-1">
        <h2 className={clsx(caption, "text-[15px] leading-5 text-white")}>Schweißnähte (Vorderansicht)</h2>
        <button
          aria-label="Dialog schließen"
          className="ml-auto flex size-6 items-center justify-center rounded-sm border border-[#f0b0a0] bg-linear-to-b from-[#ee8068] to-[#d8341c]"
        >
          <Icon><path d="M2 2l12 12M14 2L2 14" stroke="#fff" strokeWidth="3" /></Icon>
        </button>
      </div>

      <div className="px-2 pt-[18px] pb-2">
        <div role="tablist" className="flex items-end">
          <button
            role="tab"
            aria-selected="true"
            className="z-10 -mb-px h-[22px] w-[46px] rounded-t-sm border border-t-2 border-b-0 border-[#a0a0a0] border-t-[#f0a830] bg-[#fcfcfc] pr-4 pb-1 text-[11px] leading-4"
          >
            Stil
          </button>
          <button
            role="tab"
            aria-selected="false"
            className="h-[19px] w-[52px] rounded-t-sm border border-b-0 border-l-0 border-[#a0a0a0] bg-linear-to-b from-white to-[#e8e8e8] text-[11px] leading-4"
          >
            Optionen
          </button>
        </div>

        <div className="border border-[#a0a0a0] bg-[#fcfcfc] p-1">
          <div className="flex h-[183px] justify-between bg-[#e0e0e0] pr-0.5 pl-2">
            <div className="pt-[19px]">
              <PickButton id="kanten" label="Kanten">
                <path d="M5.500 1v11l2.500-2.500L10 14h2l-2-5h3.500z" fill="#fff" />
              </PickButton>
              <PickButton id="start" label="Start/Stopp" active>
                <path d="M3 13L11 5" stroke="#e01818" strokeWidth="2.500" />
                <circle cx="3" cy="13" r="2.500" fill="#10d838" stroke="#107020" />
                <path d="M13 0v7M9.500 3.500h7M11 1.500l4 4M15 1.500l-4 4" stroke="#f0e000" strokeWidth="1.500" />
              </PickButton>
              <PickButton id="richtung" label="Richtung">
                <path d="M3 3l5 2 5-1v9l-5-2-5 1z" fill="#fff020" stroke="#807800" />
                <path d="M9 7l4-5" stroke="#e01818" strokeWidth="2" />
                <path d="M11 1h5v5z" fill="#e01818" stroke="none" />
                <path d="M7 8l-5 6" strokeWidth="2" />
                <path d="M0 10v6h5z" fill="#000" stroke="none" />
              </PickButton>
            </div>

            <fieldset className="h-[172px] w-[183px] rounded-sm border border-[#d0d0d0] pl-[10px]">
              <legend className="-ml-1 px-0.5 text-[11px] leading-[14px] text-[#1040b0]">Typ</legend>
              <div className="flex gap-[10px] pt-1.5">
                <div className="flex flex-col gap-0.5 pt-[6px]">
                  <button aria-label="Einseitig" className={clsx("flex h-[35px] w-[33px] items-center justify-center rounded-xs border", pushed)}>
                    <BeadIcon x={2} />
                  </button>
                  <button aria-label="Mittig" className={clsx("flex h-[35px] w-[33px] items-center justify-center rounded-xs border", raised)}>
                    <BeadIcon x={9} />
                  </button>
                </div>
                <div className="h-[116px] w-[119px] border-2 border-[#8c8c8c] border-r-white border-b-white bg-[#c0c0c0]">
                  <svg width="100%" height="100%" fill="none" stroke="#000" strokeWidth="2" aria-hidden="true">
                    <path d="M46 1v108" />
                    {[22, 42, 62, 84].map((y) => (
                      <path key={y} d={`M47 ${y}h2q5-9 16-9t16 9`} />
                    ))}
                  </svg>
                </div>
              </div>
              <label className="-ml-1 flex items-center gap-[2px] pt-[9px] text-[11px] leading-4">
                <input
                  type="checkbox"
                  className="size-[13px] appearance-none border border-[#444] bg-linear-to-br from-[#dcdcdc] to-white"
                />
                Heften
              </label>
            </fieldset>
          </div>
        </div>

        <div className="flex items-center gap-2 pt-2">
          <button aria-label="Hilfe zum Dialog" className={clsx("mr-auto flex h-[21px] w-[22px] items-center justify-center border", raised)}>
            <HelpIcon />
          </button>
          <button className={clsx(footer, "border-2 border-[#e0a040] bg-linear-to-b from-white to-[#d4d4d4]")}>OK</button>
          <button className={clsx(footer, "border", raised)}>Abbrechen</button>
          <button className={clsx(footer, "border", raised)}>Anwenden</button>
        </div>
      </div>
    </section>
  );
}

/* ---------- Status bar and task bar ---------- */

function StatusBar() {
  return (
    <footer className={clsx(ui, "flex h-[23px] shrink-0 items-center border-t border-[#d4d4d4] bg-[#f3f3f3] pt-0.5 pl-0.5 text-[12px] leading-4 text-black")}>
      <span>Auf eine Position klicken</span>
      <span className="ml-auto">14</span>
      <span className="ml-3.5 h-3.5 w-px bg-[#c8c8c8]" />
      <span className="ml-2">6</span>
      <span className="ml-5 h-3.5 w-px bg-[#c8c8c8]" />
      <span className="ml-1.5 h-[18px] w-9 border-l-[6px] border-[#00f000] bg-black" />
      <Icon className="mr-1 ml-1">
        <path d="M2 3q0 8 8 7z" fill="#b4c8e0" stroke="#4a5f80" />
        <path d="M6 6l5-4M8 10l-3 5h8l-3-5" fill="#8ca4c4" stroke="#4a5f80" />
        <path d="M10 1q4 1 4 5" stroke="#4a5f80" />
      </Icon>
    </footer>
  );
}

const tasks: { text: string; active?: boolean; icon: ReactNode }[] = [
  {
    text: "DSL Protect",
    icon: <path d="M8 1l6 2q0 9-6 12Q2 12 2 3zM8 5v6" fill="#2f78d0" stroke="#bcd8f8" strokeWidth="1.500" />,
  },
  {
    text: "Posteingang von t...",
    icon: (
      <>
        <circle cx="8" cy="8" r="7" fill="#1c4c94" stroke="#5c94d8" />
        <path d="M3 7l5-3 6 3v5l-4 2-6-1z" fill="#f4ead8" stroke="none" />
        <path d="M4 8l5 2 4-3" stroke="#a03020" />
        <path d="M2 5q5-5 11-2" stroke="#7cb4f0" strokeWidth="2" />
      </>
    ),
  },
  {
    text: "Foren auf CAD.de...",
    icon: (
      <>
        <circle cx="8.500" cy="8" r="6.500" fill="#2c60b8" stroke="none" />
        <path d="M2 2q0 3 3 3-1 5 3 6t6-5q3 6-2 9-6 2-10-2T2 2z" fill="#f48418" stroke="#f8c040" strokeWidth=".8" />
      </>
    ),
  },
  { text: "Autodesk Inventor...", active: true, icon: null },
  {
    text: "1. Lyfthrasyr - Ra...",
    icon: <path d="M10 1L3 5v4l-1 6 4-1 8-6V5l1-4-3 2z" fill="#f8b020" stroke="#a06010" />,
  },
];

function TaskBar() {
  return (
    <div className={clsx(ui, "flex h-[29px] shrink-0 items-center border-t border-black bg-linear-to-b from-[#6c6c6c] via-[#454545] via-50% to-[#222] text-[12px] leading-4 text-white")}>
      <button className="flex h-full w-[107px] items-center rounded-r-lg border-r border-[#5a2008] bg-linear-to-b from-[#f49058] via-[#e05c1c] via-50% to-[#b43c08] pl-2.5">
        <Icon size={22}>
          <path d="M2 3q3-2 5 0l-1 5q-2-2-5 0z" fill="#e84020" stroke="none" />
          <path d="M8 3q3 2 6 0l-1 5q-3 2-6 0z" fill="#78c828" stroke="none" />
          <path d="M1 9q3-2 5 0l-1 5q-2-2-5 0z" fill="#4878e8" stroke="none" />
          <path d="M7 9q3 2 6 0l-1 5q-3 2-6 0z" fill="#f8d020" stroke="none" />
        </Icon>
        <span className="ml-1 font-['Open_Sans',sans-serif] text-[18px] leading-5 font-bold italic [text-shadow:1px_1px_1px_#5a2008]">
          Start
        </span>
      </button>
      <div className="ml-2.5 flex gap-2">
        <button aria-label="Internet Explorer">
          <Icon>
            <path d="M2 3l9-2 3 3-1 9-9 2-2-3z" fill="#e8f2fc" stroke="#3c88d0" />
            <path d="M5 8h6q0-3-3-3T5 8t3 3 3-1" stroke="#2060b8" strokeWidth="1.500" />
          </Icon>
        </button>
        <button aria-label="Winamp">
          <Icon>
            <circle cx="5" cy="5" r="2.500" fill="#ddd" stroke="#888" />
            <circle cx="10" cy="3" r="2" fill="#eee" stroke="#888" />
            <path d="M8 5v7q-1 3-3 1" stroke="#ccc" strokeWidth="2" />
          </Icon>
        </button>
        <button aria-label="Desktop">
          <Icon>
            <circle cx="8" cy="8" r="6.500" fill="#777" stroke="#ddd" />
            <path d="M3 12L13 4M5 13l7-5M4 7l7-4" stroke="#fff" strokeWidth="1.500" />
          </Icon>
        </button>
      </div>
      <div className="ml-[13px] flex h-full items-center gap-1">
        {tasks.map((task) => (
          <button
            key={task.text}
            className={clsx(
              "flex h-6 w-[156px] items-center gap-0.5 rounded-xs border pl-[7px] whitespace-nowrap",
              task.active
                ? "border-[#0c0c0c] border-b-[#777] bg-linear-to-b from-[#0c0c0c] to-[#2c2c2c]"
                : "border-[#4c4c4c] border-t-[#707070] bg-linear-to-b from-[#646464] to-[#2e2e2e]",
            )}
          >
            {task.icon ? <Icon>{task.icon}</Icon> : <AppIcon />}
            <span>{task.text}</span>
          </button>
        ))}
      </div>
      <span className="mr-[18px] ml-auto bg-[#c4c4c4] text-black">DE</span>
      <div className="flex h-full items-center gap-[3px] border-l border-black bg-linear-to-b from-[#3c3c3c] to-[#0a0a0a] pr-3.5">
        <button aria-label="Ausgeblendete Symbole" className="-ml-2 flex">
          <Icon>
            <circle cx="8" cy="8" r="7" fill="#4a4a4a" stroke="#222" />
            <path d="M10 4L6 8l4 4" stroke="#ccc" strokeWidth="1.500" />
          </Icon>
        </button>
        <Icon>
          <path d="M1 7q1-6 7-6t7 6z" fill="#28b060" stroke="#107840" />
          <path d="M2 7h12v3H2z" fill="#e4e4e4" stroke="#999" />
          <circle cx="9" cy="12" r="3" fill="#30d830" stroke="#108810" />
        </Icon>
        <Icon>
          <rect x=".5" y=".5" width="15" height="15" fill="#fff" stroke="#8048b0" />
          <path d="M4 11V5l3-2h5l-2 5H7v4zM10 8l2 4" stroke="#5c3890" strokeWidth="1.500" />
        </Icon>
        <Icon>
          <circle cx="7" cy="7" r="6" fill="#e03828" stroke="#f8b0a0" />
          <path d="M4 7l3-4 3 4z" fill="#fff" stroke="none" />
          <path d="M11 7l4.500 8h-9z" fill="#f8c020" stroke="#906000" />
          <path d="M11 10v3" />
        </Icon>
        <time className="ml-1.5">10:34</time>
      </div>
    </div>
  );
}

export default function App() {
  return (
    <div className="relative flex h-screen w-full flex-col overflow-hidden bg-[#e0e0e0]">
      <TitleBar />
      <MenuBar />
      <Toolbar />
      <div className="flex min-h-0 flex-1">
        <LeftDock />
        <Sheet />
      </div>
      <StatusBar />
      <TaskBar />
      <WeldDialog />
    </div>
  );
}
